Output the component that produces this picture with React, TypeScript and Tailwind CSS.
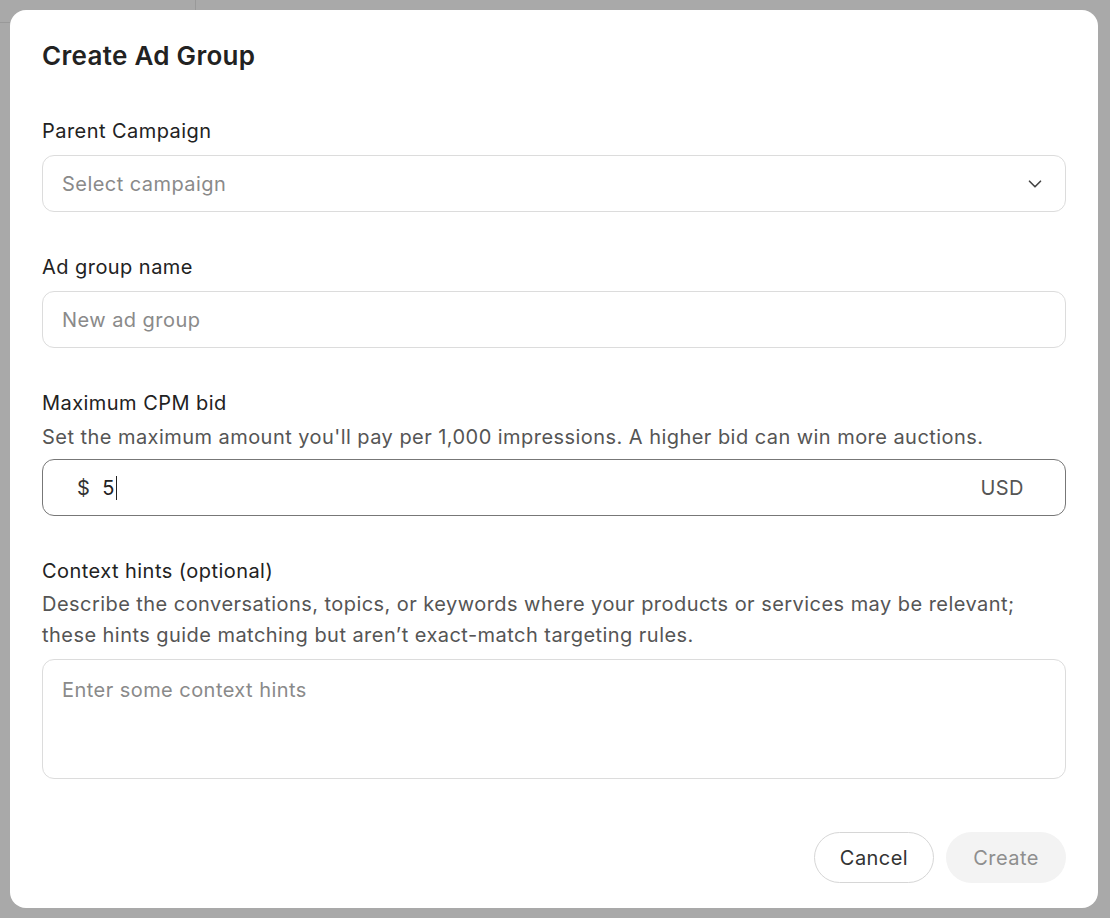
import { ChevronDown } from 'lucide-react';

const font = { fontFamily: 'Inter, "Liberation Sans", sans-serif' };

export default function App() {
    return (
        <div className="relative w-[1110px] h-[918px] bg-[#a9a9a9] overflow-hidden" style={font}>
            <div className="absolute left-[195px] top-0 h-[10px] w-px bg-[#999]" />
            <div className="absolute left-0 top-[22px] w-[10px] h-px bg-[#999]" />
            <div className="absolute left-[10px] top-[10px] w-[1088px] h-[898px] bg-white rounded-[16px] px-8 pt-[28px] flex flex-col text-[#222] text-[20px] tracking-[0.45px]">
                <h2 className="text-[26px] font-semibold leading-[36px] tracking-[0.3px]">Create Ad Group</h2>

                <div className="mt-[43px]">
                    <div className="leading-[28px]">Parent Campaign</div>
                    <div className="mt-[10px] h-[57px] rounded-[12px] border border-[#dcdcdc] flex items-center justify-between px-[19px]">
                        <span className="text-[#8a8a8a]">Select campaign</span>
                        <ChevronDown size={22} strokeWidth={1.8} className="text-[#444]" />
                    </div>
                </div>

                <div className="mt-[41px]">
                    <div className="leading-[28px]">Ad group name</div>
                    <div className="mt-[10px] h-[57px] rounded-[12px] border border-[#dcdcdc] flex items-center px-[19px]">
                        <span className="text-[#8a8a8a]">New ad group</span>
                    </div>
                </div>

                <div className="mt-[41px]">
                    <div className="leading-[28px]">Maximum CPM bid</div>
                    <div className="leading-[28px] text-[#555] mt-[6px]">Set the maximum amount you'll pay per 1,000 impressions. A higher bid can win more auctions.</div>
                    <div className="mt-[8px] h-[57px] rounded-[12px] border-[1.5px] border-[#777] flex items-center justify-between pl-[34px] pr-[41px]">
                        <span className="flex items-center">
                            <span className="text-[#333]">$</span>
                            <span className="ml-[12px] text-[#222]">5</span>
                            <span className="w-px h-[24px] bg-[#222] ml-[1px]" />
                        </span>
                        <span className="text-[#555]">USD</span>
                    </div>
                </div>

                <div className="mt-[41px]">
                    <div className="leading-[28px]">Context hints (optional)</div>
                    <div className="leading-[31px] text-[#555] mt-[4px]">Describe the conversations, topics, or keywords where your products or services may be relevant;<br />these hints guide matching but aren’t exact-match targeting rules.</div>
                    <div className="mt-[8px] h-[120px] rounded-[12px] border border-[#dcdcdc] px-[19px] pt-[15px]">
                        <span className="text-[#8a8a8a]">Enter some context hints</span>
                    </div>
                </div>

                <div className="mt-auto mb-[25px] flex justify-end gap-3">
                    <button className="h-[51px] w-[120px] rounded-full border border-[#d6d6d6] text-[#333]">Cancel</button>
                    <button className="h-[51px] w-[120px] rounded-full bg-[#f3f3f3] text-[#8e8e8e]">Create</button>
                </div>
            </div>
        </div>
    );
}
